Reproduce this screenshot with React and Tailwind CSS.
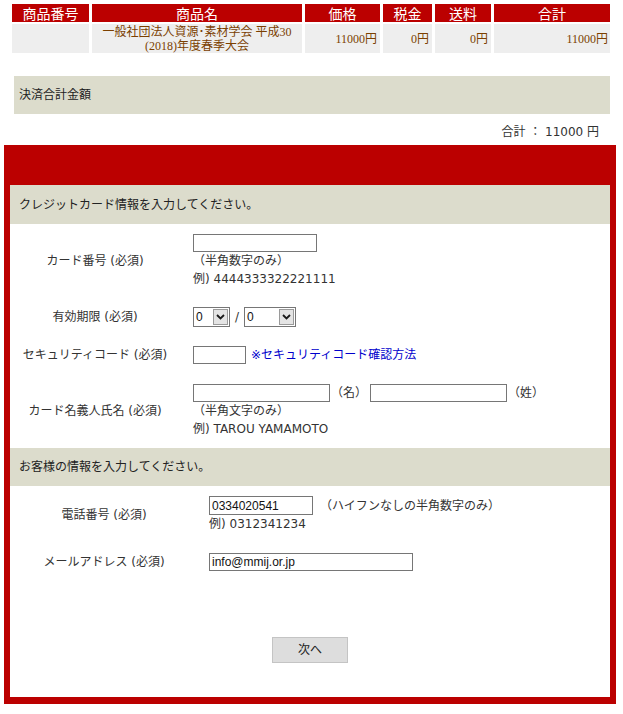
import React from 'react';

const Chevron = () => (
  <svg width="9" height="6" viewBox="0 0 9 6">
    <path d="M1 1 L4.5 4.5 L8 1" fill="none" stroke="#1a1a1a" strokeWidth="1.8" />
  </svg>
);

const FakeSelect = ({ width }) => (
  <div className={`flex h-[20px] border border-[#767676] bg-white ${width}`}>
    <span className="flex-1 pl-[2px] leading-[18px] font-['Liberation_Sans',sans-serif] text-[12px] text-[#111]">0</span>
    <span className="m-[1px] flex w-[15px] items-center justify-center border border-[#9a9a9a] bg-[#e4e4e4]">
      <Chevron />
    </span>
  </div>
);

const Band = ({ children, className = '' }) => (
  <div className={`flex h-[38px] items-center bg-[#dcdccc] text-[#222] ${className}`}>{children}</div>
);

const TextBox = ({ width, value = '', height = 'h-[18px]' }) => (
  <input
    readOnly
    value={value}
    className={`${width} ${height} border border-[#767676] bg-white px-[2px] font-['Liberation_Sans',sans-serif] text-[12px] text-[#111] outline-none`}
  />
);

const headCell = 'h-[18px] bg-[#bb0000] text-center text-[14px] leading-[18px] text-white';
const bodyCell =
  "h-[29px] bg-[#eeeeee] font-['Liberation_Serif','Noto_Sans_CJK_JP',serif] text-[12px] leading-[14px] text-[#7b3f00]";

export default function App() {
  return (
    <div className="min-h-[714px] w-[623px] bg-white font-['DejaVu_Sans','Noto_Sans_CJK_JP',sans-serif] text-[12px] text-[#333]">
      {/* order table */}
      <div className="pl-[12px] pt-[4px]">
        <div className="grid grid-cols-[77px_210px_75px_49px_56px_116px] gap-x-[3px] gap-y-[2px] font-['Noto_Sans_CJK_JP',sans-serif]">
          <div className={headCell}>商品番号</div>
          <div className={headCell}>商品名</div>
          <div className={headCell}>価格</div>
          <div className={headCell}>税金</div>
          <div className={headCell}>送料</div>
          <div className={headCell}>合計</div>

          <div className={bodyCell}></div>
          <div className={`${bodyCell} flex flex-col items-center justify-center text-center`}>
            <span>一般社団法人資源･素材学会 平成30</span>
            <span>(2018)年度春季大会</span>
          </div>
          <div className={`${bodyCell} flex items-center justify-end pr-[3px]`}>11000円</div>
          <div className={`${bodyCell} flex items-center justify-end pr-[3px]`}>0円</div>
          <div className={`${bodyCell} flex items-center justify-end pr-[3px]`}>0円</div>
          <div className={`${bodyCell} flex items-center justify-end pr-[2px]`}>11000円</div>
        </div>
      </div>

      <Band className="ml-[14px] mt-[23px] w-[596px] pl-[5px]">決済合計金額</Band>

      <div className="flex h-[31px] items-end justify-end pb-[4px] pr-[24px] text-[#333]">
        合計 ： 11000 円
      </div>

      {/* payment form */}
      <div className="ml-[4px] w-[612px] bg-[#bb0000] px-[6px] pb-[7px] pt-[40px]">
        <div className="bg-white">
          <Band className="h-[39px] pl-[9px]">クレジットカード情報を入力してください。</Band>

          <div className="flex py-[10px]">
            <div className="w-[170px] self-center text-center">カード番号 (必須)</div>
            <div className="ml-[13px] flex flex-col leading-[18px]">
              <TextBox width="w-[124px]" />
              <span>（半角数字のみ）</span>
              <span>例) 4444333322221111</span>
            </div>
          </div>

          <div className="flex py-[9px]">
            <div className="w-[170px] self-center text-center">有効期限 (必須)</div>
            <div className="ml-[13px] flex items-center">
              <FakeSelect width="w-[37px]" />
              <span className="mx-[5px]">/</span>
              <FakeSelect width="w-[52px]" />
            </div>
          </div>

          <div className="flex py-[10px]">
            <div className="w-[170px] self-center text-center">セキュリティコード (必須)</div>
            <div className="ml-[13px] flex items-center">
              <TextBox width="w-[53px]" />
              <a className="ml-[5px] text-[#0000cc]">※セキュリティコード確認方法</a>
            </div>
          </div>

          <div className="flex py-[10px]">
            <div className="w-[170px] self-center text-center">カード名義人氏名 (必須)</div>
            <div className="ml-[13px] flex flex-col leading-[18px]">
              <div className="flex items-center">
                <TextBox width="w-[137px]" />
                <span className="ml-[1px]">（名）</span>
                <span className="ml-[3px]">
                  <TextBox width="w-[137px]" />
                </span>
                <span className="ml-[1px]">（姓）</span>
              </div>
              <span>（半角文字のみ）</span>
              <span>例) TAROU YAMAMOTO</span>
            </div>
          </div>

          <Band className="pl-[9px]">お客様の情報を入力してください。</Band>

          <div className="flex py-[10px]">
            <div className="w-[188px] self-center text-center">電話番号 (必須)</div>
            <div className="ml-[11px] flex flex-col leading-[18px]">
              <div className="flex items-center">
                <TextBox width="w-[104px]" height="h-[19px]" value="0334020541" />
                <span className="ml-[7px]">（ハイフンなしの半角数字のみ）</span>
              </div>
              <span>例) 0312341234</span>
            </div>
          </div>

          <div className="flex py-[10px]">
            <div className="w-[188px] self-center text-center">メールアドレス (必須)</div>
            <div className="ml-[11px] flex items-center">
              <TextBox width="w-[204px]" value="info@mmij.or.jp" />
            </div>
          </div>

          <div className="flex justify-center pb-[34px] pt-[56px]">
            <button className="h-[26px] w-[76px] border border-[#c4c4c4] bg-[#dddddd] text-[12px] text-[#222]">
              次へ
            </button>
          </div>
        </div>
      </div>
    </div>
  );
}
